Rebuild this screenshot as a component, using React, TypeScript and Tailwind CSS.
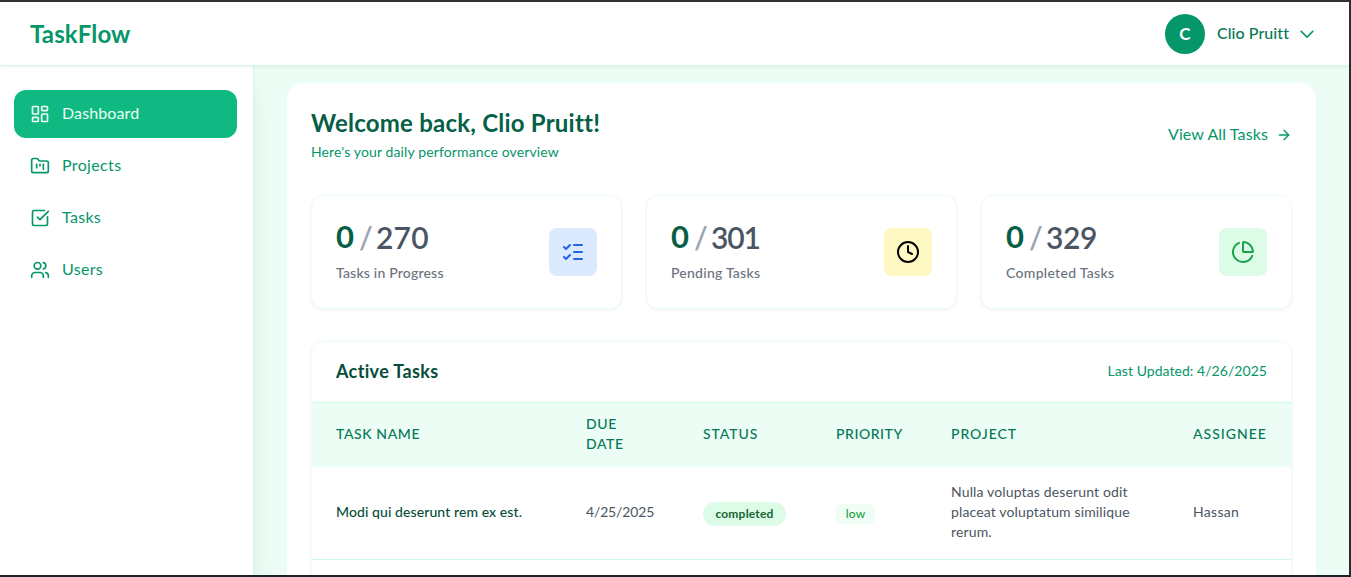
import React from 'react';
import {
  ArrowRight,
  ChartPie,
  Clock,
  FolderKanban,
  LayoutDashboard,
  ListChecks,
  SquareCheckBig,
  Users,
} from 'lucide-react';

const navItems = [
  { label: 'Dashboard', Icon: LayoutDashboard, active: true, tracking: 'tracking-[0.12px]' },
  { label: 'Projects', Icon: FolderKanban, active: false, tracking: 'tracking-[0.35px]' },
  { label: 'Tasks', Icon: SquareCheckBig, active: false, tracking: 'tracking-[0.3px]' },
  { label: 'Users', Icon: Users, active: false, tracking: 'tracking-[0.3px]' },
];

const stats = [
  { label: 'Tasks in Progress', total: 270, Icon: ListChecks, tile: 'bg-[#dbeafe] text-[#2563eb]', tracking: 'tracking-[0.2px]', totalTracking: 'tracking-[0.2px]' },
  { label: 'Pending Tasks', total: 301, Icon: Clock, tile: 'bg-[#fef9c3] text-black', tracking: 'tracking-[0.25px]', totalTracking: 'tracking-[-1.1px]' },
  { label: 'Completed Tasks', total: 329, Icon: ChartPie, tile: 'bg-[#dcfce7] text-[#16a34a]', tracking: 'tracking-[0.3px]', totalTracking: 'tracking-[-0.4px]' },
];

function Header() {
  return (
    <header className="relative z-20 flex h-16 shrink-0 items-center justify-between border-b border-[#d1fae5] bg-white pl-[30px] pr-8 shadow-[0_1px_3px_rgba(6,95,70,0.08)]">
      <div className="text-2xl font-bold tracking-[0.12px] text-[#059669]">TaskFlow</div>
      <button className="flex items-center gap-3">
        <span className="flex size-10 items-center justify-center rounded-full bg-[#059669] text-[17px] font-bold text-white">
          C
        </span>
        <span className="pb-0.5 font-medium tracking-[0.06px] text-[#047857]">Clio Pruitt</span>
        <svg className="-ml-1 size-5 text-[#059669]" viewBox="0 0 24 24" fill="none" stroke="currentColor" strokeWidth="1.8">
          <path d="M19.5 8.25 12 15.75 4.5 8.25" />
        </svg>
      </button>
    </header>
  );
}

function Sidebar() {
  return (
    <aside className="relative z-10 w-[254px] shrink-0 border-r border-[#d1fae5] bg-white pl-3.5 pr-4 pt-6 shadow-xl">
      <nav className="flex flex-col gap-1">
        {navItems.map(({ label, Icon, active, tracking }) => (
          <a
            key={label}
            className={`flex h-12 items-center gap-3 rounded-xl px-4 ${active ? 'bg-[#10b981] text-[#ecfdf5]' : 'text-[#059669]'}`}
          >
            <Icon size={20} />
            <span className={`pb-0.5 ${tracking}`}>{label}</span>
          </a>
        ))}
      </nav>
    </aside>
  );
}

function StatCards() {
  return (
    <div className="grid grid-cols-3 gap-6">
      {stats.map(({ label, total, Icon, tile, tracking, totalTracking }) => (
        <div key={label} className="flex h-[114px] items-center justify-between rounded-xl border border-[#ecfdf5] bg-white px-6 shadow-[0_1px_3px_rgba(6,95,70,0.08)]">
          <div className="pb-[3px]">
            <div className="flex h-9 items-center text-3xl font-semibold">
              <span className="w-[23px] text-[31px] font-bold text-[#065f46]">0</span>
              <span className="w-[17px] text-[#9ca3af]">/</span>
              <span className={`text-[#4b5563] ${totalTracking}`}>{total}</span>
            </div>
            <div className={`mt-2 text-sm font-medium text-[#6b7280] ${tracking}`}>{label}</div>
          </div>
          <div className={`flex size-12 items-center justify-center rounded-lg ${tile}`}>
            <Icon size={24} />
          </div>
        </div>
      ))}
    </div>
  );
}

function TaskTable() {
  return (
    <section className="mt-8 h-[400px] overflow-hidden rounded-xl border border-[#ecfdf5] bg-white shadow-[0_1px_3px_rgba(6,95,70,0.08)]">
      <div className="flex h-[61px] items-center justify-between border-b border-[#d1fae5] px-6 pb-0.5">
        <h2 className="text-lg font-bold tracking-[0.35px] text-[#064e3b]">Active Tasks</h2>
        <span className="text-sm tracking-[0.05px] text-[#059669]">Last Updated: 4/26/2025</span>
      </div>
      <table className="w-full table-fixed text-left text-sm">
        <colgroup>
          <col className="w-[250px]" />
          <col className="w-[117px]" />
          <col className="w-[133px]" />
          <col className="w-[115px]" />
          <col className="w-[242px]" />
          <col />
        </colgroup>
        <thead className="bg-[#ecfdf5] uppercase text-[#047857]">
          <tr className="h-16">
            <th className="px-6 pb-0.5 font-medium tracking-[0.6px]">Task Name</th>
            <th className="px-6 pb-0.5 font-medium tracking-[0.6px]">Due Date</th>
            <th className="px-6 pb-0.5 font-medium tracking-[0.95px]">Status</th>
            <th className="px-6 pb-0.5 font-medium tracking-[0.55px]">Priority</th>
            <th className="px-6 pb-0.5 font-medium tracking-[0.95px]">Project</th>
            <th className="whitespace-nowrap px-6 pb-0.5 font-medium tracking-[1px]">Assignee</th>
          </tr>
        </thead>
        <tbody className="text-[#4b5563]">
          <tr className="h-[92px] border-b border-[#d1fae5]">
            <td className="whitespace-nowrap px-6 pb-px font-medium tracking-[0.09px] text-[#064e3b]">Modi qui deserunt rem ex est.</td>
            <td className="whitespace-nowrap px-6 pb-px tracking-[-0.15px]">4/25/2025</td>
            <td className="px-6 pt-[3px]">
              <span className="flex h-6 w-[83px] items-center justify-center rounded-full bg-[#dcfce7] pb-px text-xs font-bold tracking-[0.2px] text-[#166534]">
                completed
              </span>
            </td>
            <td className="px-6 pt-[3px]">
              <span className="flex h-5 w-[39px] items-center justify-center rounded-md bg-[#f0fdf4] pb-px text-xs font-medium tracking-[0.2px] text-[#16a34a]">
                low
              </span>
            </td>
            <td className="px-6 pb-px tracking-[0.14px]">
              Nulla voluptas deserunt odit
              <br />
              placeat voluptatum similique
              <br />
              rerum.
            </td>
            <td className="px-6 pb-px tracking-[0.3px]">Hassan</td>
          </tr>
        </tbody>
      </table>
    </section>
  );
}

export default function App() {
  return (
    <div className="flex h-[577px] w-[1351px] flex-col overflow-hidden border-y-2 border-r-2 border-t-[#333137] border-r-[#2d2d2d] border-b-[#1c2029] bg-[#ecfdf5] font-['Lato',sans-serif] [font-variant-ligatures:none]">
      <Header />
      <div className="flex min-h-0 flex-1">
        <Sidebar />
        <main className="min-w-0 flex-1 pl-[33px] pr-[33px] pt-[17px]">
          <div className="h-[700px] rounded-2xl bg-white px-6 pt-6 shadow-[0_1px_2px_rgba(6,95,70,0.05)]">
            <div className="flex h-[88px] items-start justify-between">
              <div>
                <h1 className="text-2xl font-bold tracking-[0.22px] text-[#065f46]">Welcome back, Clio Pruitt!</h1>
                <p className="mt-[3px] text-sm tracking-[0.13px] text-[#059669]">Here's your daily performance overview</p>
              </div>
              <a className="mt-4 flex items-center gap-2 text-[#059669]">
                <span className="-mt-px pb-px tracking-[0.12px]">View All Tasks</span>
                <ArrowRight size={16} />
              </a>
            </div>
            <StatCards />
            <TaskTable />
          </div>
        </main>
      </div>
    </div>
  );
}
